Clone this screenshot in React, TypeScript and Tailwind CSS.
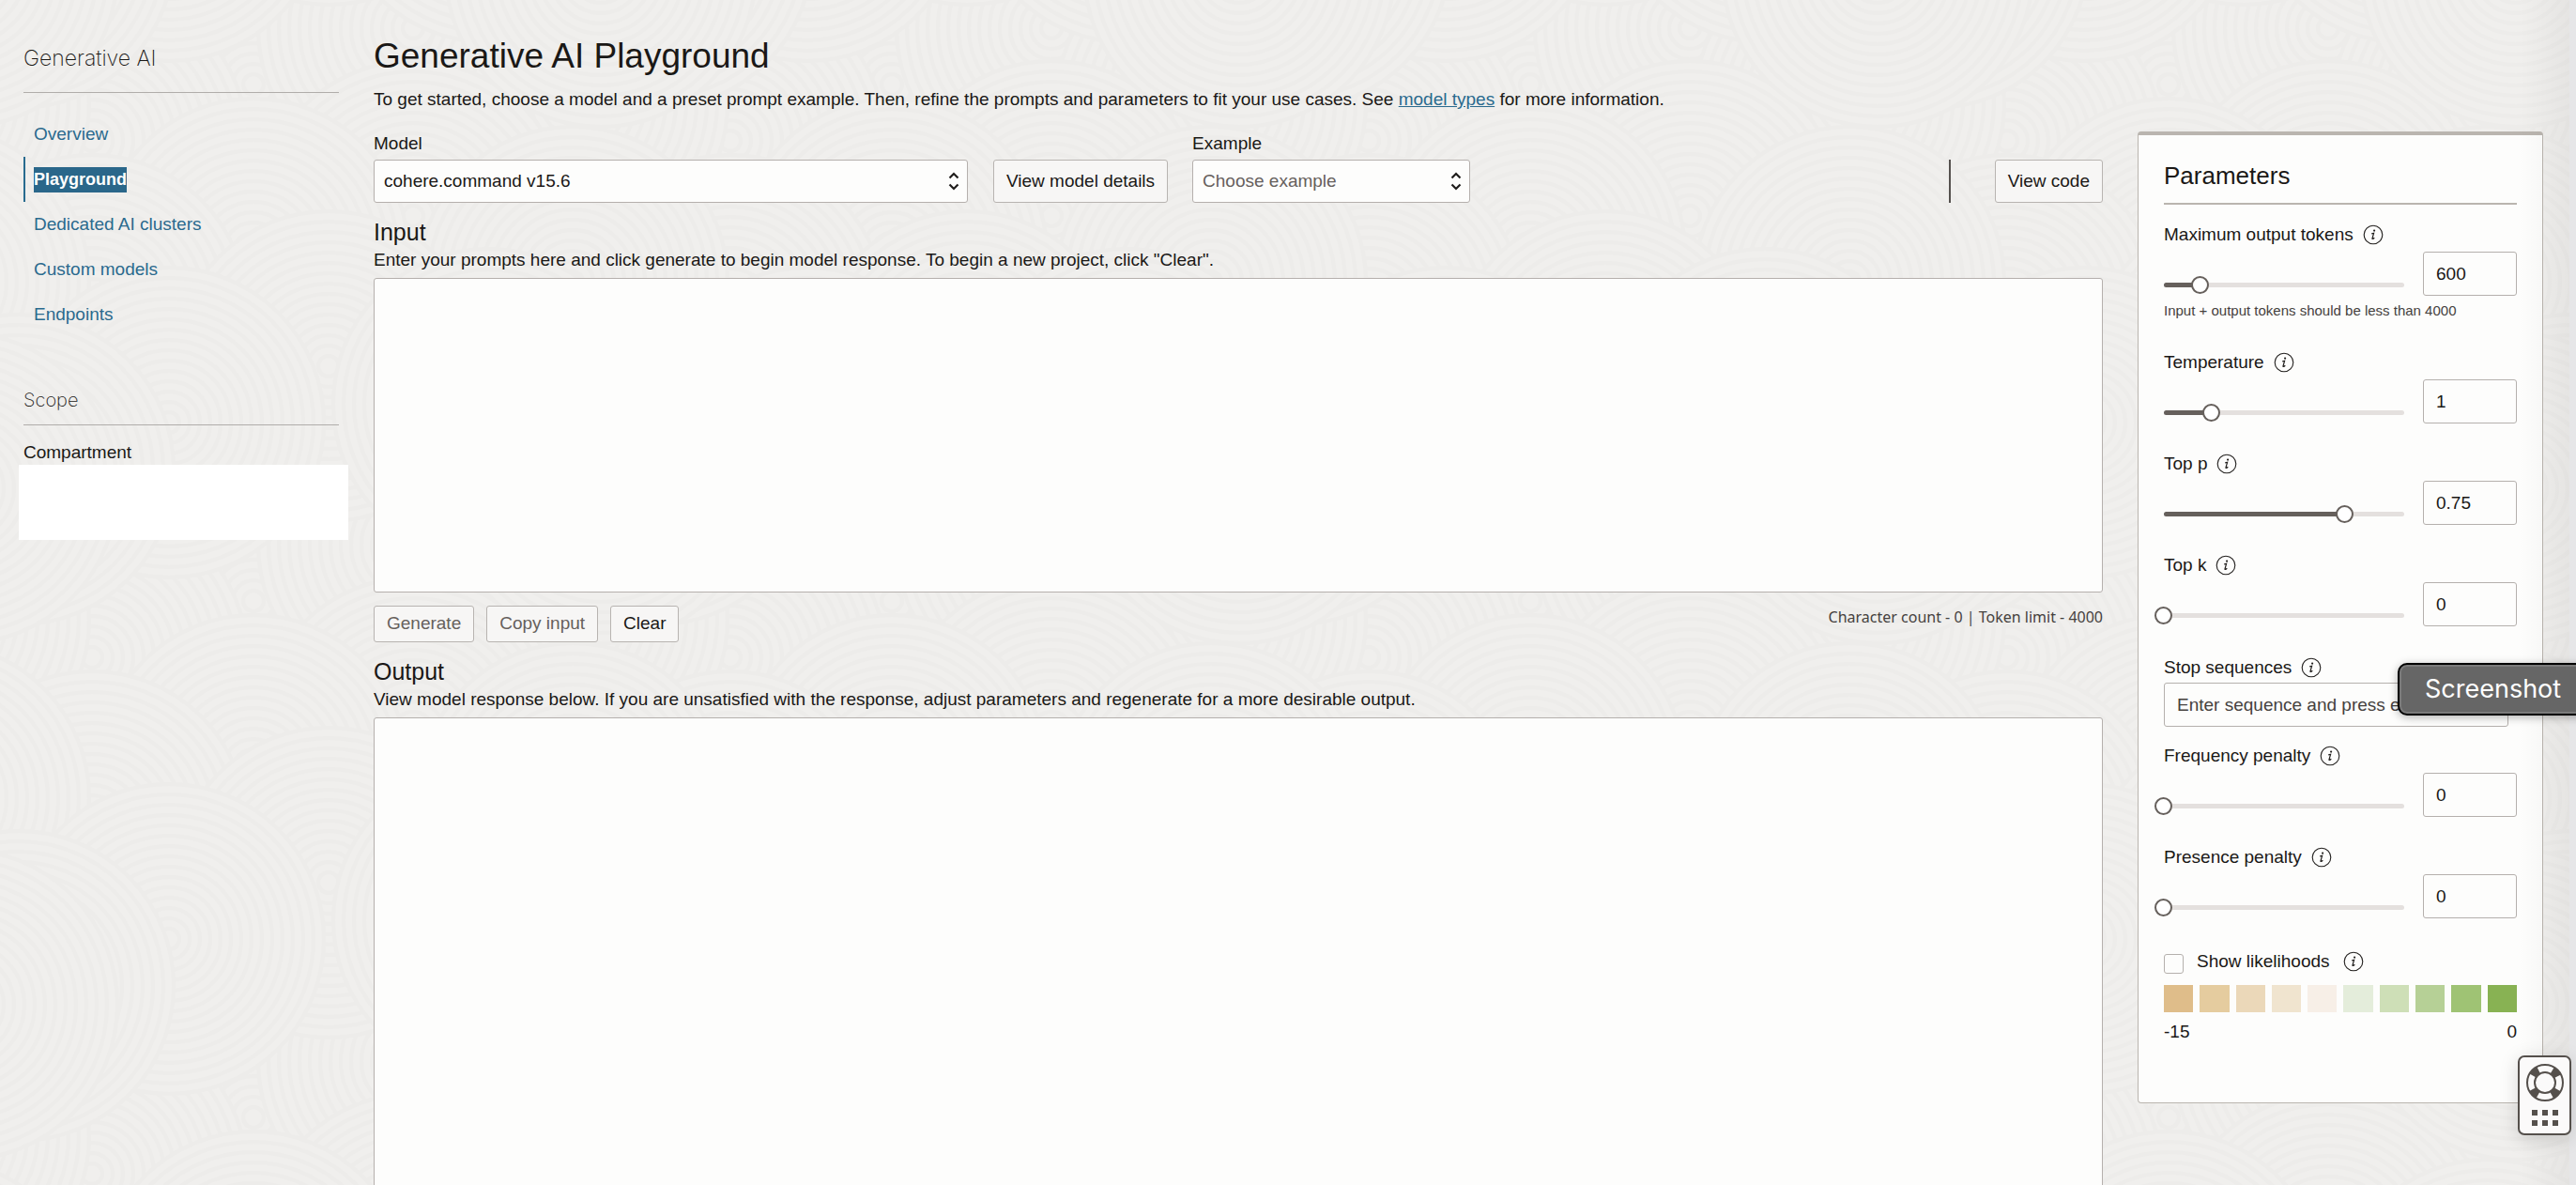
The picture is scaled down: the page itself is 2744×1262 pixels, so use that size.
import React from "react";

const rings = Array.from({ length: 15 }, (_, i) => 11 * (i + 1));
const discs = [
  [270, 90], [98, 150], [440, 30], [610, 110], [440, 230], [270, 270], [98, 330],
  [610, 300], [350, 390], [180, 450], [520, 430], [20, 500], [640, 520],
];

function Texture() {
  return (
    <svg className="absolute inset-0 -z-10 h-full w-full" aria-hidden="true">
      <defs>
        <g id="disc">
          <circle r="165" fill="#f0efed" />
          {rings.map((r) => (
            <circle key={r} r={r} fill="none" stroke="#edecea" strokeWidth="4" />
          ))}
        </g>
        <pattern id="waves" width="680" height="550" patternUnits="userSpaceOnUse">
          <rect width="680" height="550" fill="#f0efed" />
          {discs.flatMap(([x, y], i) =>
            [-680, 0, 680].flatMap((dx) =>
              [-550, 0, 550].map((dy) => (
                <use key={`${i}:${dx}:${dy}`} href="#disc" x={x + dx} y={y + dy} />
              )),
            ),
          )}
        </pattern>
      </defs>
      <rect width="100%" height="100%" fill="url(#waves)" />
    </svg>
  );
}

function InfoIcon() {
  return (
    <svg width="22" height="22" viewBox="0 0 22 22" fill="none" aria-hidden="true">
      <circle cx="11" cy="11" r="9.8" stroke="#201e1c" strokeWidth="1.1" />
      <circle cx="12.1" cy="6.6" r="1.1" fill="#201e1c" />
      <path d="M9.2 9.9 11.6 9.4 10 14.8 C9.8 15.8 10.6 15.7 12.3 14.2" stroke="#201e1c" strokeWidth="1.2" />
    </svg>
  );
}

function InfoButton({ about }: { about: string }) {
  return (
    <button type="button" aria-label={`About ${about}`} className="shrink-0">
      <InfoIcon />
    </button>
  );
}

function UpDown() {
  return (
    <svg
      className="pointer-events-none absolute top-3 right-2"
      width="14"
      height="22"
      viewBox="0 0 14 22"
      fill="none"
      stroke="#201e1c"
      strokeWidth="2.2"
      aria-hidden="true"
    >
      <path d="M2.5 7.5 7 3 11.5 7.5M2.5 14.5 7 19 11.5 14.5" />
    </svg>
  );
}

const field = "rounded-[3px] border border-[#b5b0ad] bg-[#fdfdfc] text-[19px]";
const btn = "rounded-[3px] border border-[#b8b4b1] bg-[#f7f6f5] text-[19px] whitespace-nowrap";

function Slider({ label, value, percent, hint }: { label: string; value: string; percent: number; hint?: string }) {
  const id = label.toLowerCase().replaceAll(" ", "-");
  return (
    <div>
      <div className="flex h-[28px] items-center gap-2.5">
        <label htmlFor={id}>{label}</label>
        <InfoButton about={label} />
      </div>
      <div className="mt-1 flex items-start gap-5">
        <div className="relative mt-6 h-[22px] min-w-0 flex-1">
          <div className="absolute inset-x-0 top-[9px] h-[5px] rounded-full bg-[#e4e0de]">
            <div className="h-full rounded-full bg-[#66605c]" style={{ width: `${percent}%` }} />
          </div>
          <input
            type="range"
            min="0"
            max="100"
            defaultValue={percent}
            aria-label={`${label} slider`}
            className="absolute top-0.5 -left-2.5 h-[19px] w-[calc(100%+20px)] appearance-none bg-transparent [&::-webkit-slider-thumb]:size-[19px] [&::-webkit-slider-thumb]:appearance-none [&::-webkit-slider-thumb]:rounded-full [&::-webkit-slider-thumb]:border-2 [&::-webkit-slider-thumb]:border-[#66605c] [&::-webkit-slider-thumb]:bg-white"
          />
        </div>
        <input id={id} defaultValue={value} className={`${field} h-[47px] w-[100px] px-[13px]`} />
      </div>
      {hint && <p className="mt-1.5 text-[15px] leading-[20px] whitespace-nowrap text-[#45413e]">{hint}</p>}
    </div>
  );
}

const swatches = [
  "bg-[#dfbd8a]", "bg-[#e5cc9f]", "bg-[#ebd8b9]", "bg-[#f0e4cf]", "bg-[#f7efe7]",
  "bg-[#e4eddb]", "bg-[#cedfb7]", "bg-[#b6d096]", "bg-[#9fc374]", "bg-[#88b253]",
];

function Parameters() {
  return (
    <aside className="w-[432px] shrink-0 rounded-[4px] border border-t-4 border-[#bab5af] bg-[#fdfdfc] px-[27px] pt-[25px] pb-[62px]">
      <h2 className="border-b-2 border-[#bab5af] pb-[11px] text-[26px] leading-[36px]">Parameters</h2>
      <div className="mt-[18px] flex flex-col gap-[29px]">
        <div className="mb-[2px]">
          <Slider label="Maximum output tokens" value="600" percent={15} hint="Input + output tokens should be less than 4000" />
        </div>
        <Slider label="Temperature" value="1" percent={20} />
        <Slider label="Top p" value="0.75" percent={75} />
        <Slider label="Top k" value="0" percent={0} />
      </div>
      <div className="mt-[30px] pr-[9px]">
        <div className="flex h-[28px] items-center gap-2.5">
          <label htmlFor="stop">Stop sequences</label>
          <InfoButton about="Stop sequences" />
        </div>
        <input
          id="stop"
          placeholder="Enter sequence and press enter"
          className={`${field} mt-0.5 h-[47px] w-full px-[13px] placeholder:text-[#45413e]`}
        />
      </div>
      <div className="mt-[17px] flex flex-col gap-[29px]">
        <Slider label="Frequency penalty" value="0" percent={0} />
        <Slider label="Presence penalty" value="0" percent={0} />
      </div>
      <div className="mt-8 flex h-[28px] items-center">
        <input
          id="likelihoods"
          type="checkbox"
          className="mt-1 size-[21px] appearance-none rounded-[3px] border border-[#b5b0ad] bg-[#fdfdfc]"
        />
        <label htmlFor="likelihoods" className="mx-3.5">Show likelihoods</label>
        <InfoButton about="Show likelihoods" />
      </div>
      <div className="mt-[11px] flex gap-[7px]">
        {swatches.map((c) => (
          <div key={c} className={`${c} h-[29px] flex-1`} />
        ))}
      </div>
      <div className="mt-2 flex justify-between leading-[26px]">
        <span>-15</span>
        <span>0</span>
      </div>
    </aside>
  );
}

const links = ["Overview", "Playground", "Dedicated AI clusters", "Custom models", "Endpoints"];

function Sidebar() {
  return (
    <nav className="w-[371px] shrink-0 pl-[25px]">
      <h2 className="mr-[10px] border-b border-[#b0adaa] pt-[47px] pb-[21px] font-['Inter'] text-[23px] leading-[30px] font-extralight">
        Generative AI
      </h2>
      <ul className="mt-5">
        {links.map((l) => (
          <li key={l} className="flex h-[48px] items-center">
            {l === "Playground" ? (
              <a href="#" aria-current="page" className="flex h-full items-center border-l-2 border-[#286b8f] pl-[9px] text-[18px] font-bold text-white">
                <span className="bg-[#2a678a] leading-[27px]">{l}</span>
              </a>
            ) : (
              <a href="#" className="pl-[11px] text-[#2a6a8e]">{l}</a>
            )}
          </li>
        ))}
      </ul>
      <h2 className="mt-[53px] mr-[10px] border-b border-[#b0adaa] pb-3 font-['Inter'] text-[20px] leading-[28px] font-extralight">Scope</h2>
      <p className="mt-4 leading-[26px]">Compartment</p>
      <div className="-ml-[5px] h-[80px] bg-white" />
    </nav>
  );
}

export default function App() {
  return (
    <div className="relative isolate flex h-screen overflow-hidden bg-[#f0efed] font-['Liberation_Sans',sans-serif] text-[19px] text-[#1a1816]">
      <Texture />
      <Sidebar />
      <main className="ml-[27px] flex min-w-0 flex-1 flex-col">
        <h1 className="mt-[37px] text-[37px] leading-[46px]">Generative AI Playground</h1>
        <p className="mt-[10px] leading-[26px]">
          To get started, choose a model and a preset prompt example. Then, refine the prompts and parameters to fit your use cases. See{" "}
          <a href="#" className="text-[#2a6a8e] underline">model types</a> for more information.
        </p>
        <div className="mt-[21px] flex items-end">
          <div className="w-[633px]">
            <label htmlFor="model" className="block leading-[26px]">Model</label>
            <div className="relative mt-[4px]">
              <select id="model" className={`${field} h-[46px] w-full appearance-none px-2.5`}>
                <option>cohere.command v15.6</option>
              </select>
              <UpDown />
            </div>
          </div>
          <button type="button" className={`${btn} ml-[27px] h-[46px] px-[13px]`}>View model details</button>
          <div className="ml-[26px] w-[296px]">
            <label htmlFor="example" className="block leading-[26px]">Example</label>
            <div className="relative mt-[4px]">
              <select id="example" className={`${field} h-[46px] w-full appearance-none px-2.5 text-[#66605c]`}>
                <option>Choose example</option>
              </select>
              <UpDown />
            </div>
          </div>
          <div className="ml-auto h-[46px] border-l-2 border-[#55514e]" />
          <button type="button" className={`${btn} ml-[47px] h-[46px] px-[13px]`}>View code</button>
        </div>
        <h2 className="mt-4 text-[25px] leading-[30px]">Input</h2>
        <label htmlFor="input" className="mt-0.5 mb-[6px] leading-[26px]">
          Enter your prompts here and click generate to begin model response. To begin a new project, click "Clear".
        </label>
        <textarea id="input" className={`${field} h-[335px] w-full shrink-0 resize-none`} />
        <div className="mt-[14px] flex items-start gap-[13px]">
          <button type="button" disabled className={`${btn} h-[39px] px-[13px] text-[#66605c]`}>Generate</button>
          <button type="button" disabled className={`${btn} h-[39px] px-[13px] text-[#66605c]`}>Copy input</button>
          <button type="button" className={`${btn} h-[39px] px-[13px]`}>Clear</button>
          <span className="ml-auto font-['Noto_Sans'] text-[16px] leading-[24px] text-[#45413e]">Character count - 0 | Token limit - 4000</span>
        </div>
        <h2 className="mt-4 text-[25px] leading-[30px]">Output</h2>
        <label htmlFor="output" className="mt-0.5 mb-[6px] leading-[26px]">
          View model response below. If you are unsatisfied with the response, adjust parameters and regenerate for a more desirable output.
        </label>
        <textarea id="output" readOnly className={`${field} h-[700px] w-full shrink-0 resize-none`} />
      </main>
      <div className="mr-[35px] ml-[37px] pt-[140px]">
        <Parameters />
      </div>
      <div className="absolute inset-y-0 right-0 w-[60px] bg-gradient-to-r from-transparent to-black/5" />
      <div className="absolute inset-y-0 right-0 w-[7px] bg-[#e6e6e8]" />
      <div className="absolute top-[706px] -right-4 flex h-[56px] w-[206px] items-center rounded-[10px] border-2 border-black bg-[#666666] pl-[27px] font-['Inter'] text-[27px] text-white shadow-[inset_0_0_0_2px_#7b7b7b,0_2px_10px_rgba(0,0,0,0.3)]">
        Screenshot
      </div>
      <button
        type="button"
        aria-label="Help"
        className="absolute right-[5px] bottom-[53px] flex h-[85px] w-[57px] flex-col items-center rounded-[7px] border-2 border-[#55504c] bg-[#fbfafa] pt-[6px] shadow-[0_4px_20px_rgba(0,0,0,0.15)]"
      >
        <svg width="42" height="42" viewBox="0 0 42 42" fill="none" stroke="#55504c" aria-hidden="true">
          <circle cx="21" cy="21" r="15" strokeWidth="8" strokeDasharray="8.4 15.16" strokeDashoffset="-7.58" />
          <circle cx="21" cy="21" r="19" strokeWidth="2" />
          <circle cx="21" cy="21" r="11" strokeWidth="2" />
        </svg>
        <svg className="mt-2" width="28" height="17" viewBox="0 0 28 17" fill="#55504c" aria-hidden="true">
          <path d="M0 0h6v6H0zM11 0h6v6h-6zM22 0h6v6h-6zM0 11h6v6H0zM11 11h6v6h-6zM22 11h6v6h-6z" />
        </svg>
      </button>
    </div>
  );
}
